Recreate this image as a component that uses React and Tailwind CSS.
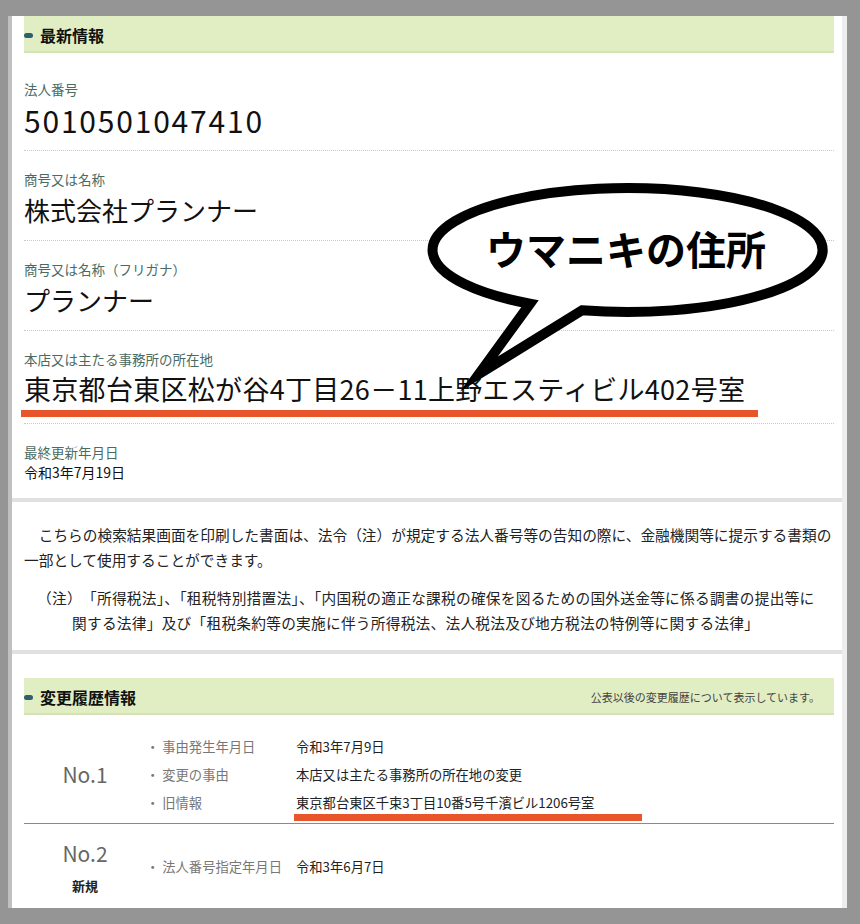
const jp = { fontFamily: '"Noto Sans CJK JP", "Noto Sans", sans-serif' }

function SectionBar({ title, note }) {
  return (
    <div className="flex items-center h-[37px] bg-[#e1edc3] border-b-2 border-[#d5e1b6] pt-[3px]">
      <span className="w-[9px] h-[5px] rounded-full bg-[#2e5f6c]" />
      <span className="ml-[7px] text-[16px] font-bold text-[#111]">{title}</span>
      {note && <span className="ml-auto mr-[14px] text-[11px] text-[#444]">{note}</span>}
    </div>
  )
}

function Item({ label, children, first, last }) {
  return (
    <div className={(first ? 'pt-[26px] ' : 'pt-[18px] ') + (last ? '' : 'border-b border-dotted border-[#c9c9c9]')}>
      <div className="text-[13.5px] leading-[20px] text-[#4a6b62]">{label}</div>
      {children}
    </div>
  )
}

function Row({ label, children }) {
  return (
    <div className="flex h-[28px] items-center text-[13.3px]">
      <span className="w-[150px] text-[#777]">・ {label}</span>
      <span className="text-[#222]">{children}</span>
    </div>
  )
}

export default function App() {
  return (
    <div className="relative w-[860px] h-[924px] bg-[#959595] pt-4 pl-2 overflow-hidden" style={jp}>
      <div className="w-[839px] h-[892px] bg-white border-l-4 border-l-[#c0c0c0] border-r-[5px] border-r-[#ededed] flex flex-col">
        {/* 最新情報 */}
        <div className="pl-3 pr-[8px]">
          <SectionBar title="最新情報" />
          <Item label="法人番号" first>
            <div className="text-[30px] leading-[42px] tracking-[1.8px] text-[#111] pb-[9px]">5010501047410</div>
          </Item>
          <Item label="商号又は名称">
            <div className="text-[26px] leading-[42px] text-[#111] pb-[9px]">株式会社プランナー</div>
          </Item>
          <Item label="商号又は名称（フリガナ）">
            <div className="text-[26px] leading-[42px] text-[#111] pb-[9px]">プランナー</div>
          </Item>
          <Item label="本店又は主たる事務所の所在地">
            <div className="text-[27px] leading-[40px] tracking-[0.3px] text-[#111] whitespace-nowrap">東京都台東区松が谷4丁目26－11上野エスティビル402号室</div>
            <div className="-ml-[3px] mt-[1px] w-[737px] h-[7px] bg-[#e8552b]" />
            <div className="h-[6px]" />
          </Item>
          <Item label="最終更新年月日" last>
            <div className="text-[14px] leading-[20px] text-[#111] pb-[16px]">令和3年7月19日</div>
          </Item>
        </div>

        <div className="h-[4px] bg-[#e0e0e0]" />

        {/* 注意書き */}
        <div className="pl-3 pr-[8px] pt-[20px] pb-[15px] text-[14.7px] leading-[25px] text-[#222]">
          <p className="indent-[1em]">こちらの検索結果画面を印刷した書面は、法令（注）が規定する法人番号等の告知の際に、金融機関等に提示する書類の一部として使用することができます。</p>
          <p className="mt-[13px] mr-[12px] pl-[48px] -indent-[35px] tracking-[0.25px]">（注）　「所得税法」、「租税特別措置法」、「内国税の適正な課税の確保を図るための国外送金等に係る調書の提出等に関する法律」及び「租税条約等の実施に伴う所得税法、法人税法及び地方税法の特例等に関する法律」</p>
        </div>

        <div className="h-[4px] bg-[#e0e0e0]" />

        {/* 変更履歴情報 */}
        <div className="pl-3 pr-[8px] pt-[24px]">
          <SectionBar title="変更履歴情報" note="公表以後の変更履歴について表示しています。" />
          <div className="flex items-center mt-[18px] pb-[6px] border-b border-[#8a8a8a]">
            <div className="w-[122px] text-center text-[21px] text-[#666]">No.1</div>
            <div>
              <Row label="事由発生年月日">令和3年7月9日</Row>
              <Row label="変更の事由">本店又は主たる事務所の所在地の変更</Row>
              <Row label="旧情報">
                <span className="relative">
                  東京都台東区千束3丁目10番5号千濱ビル1206号室
                  <span className="absolute -left-[2px] top-[21px] w-[348px] h-[7px] bg-[#e8552b]" />
                </span>
              </Row>
            </div>
          </div>
          <div className="flex items-center pt-[14px]">
            <div className="w-[122px] flex flex-col items-center">
              <div className="text-[21px] leading-[30px] text-[#666]">No.2</div>
              <div className="mt-[8px] text-[13px] leading-[20px] font-bold text-[#222]">新規</div>
            </div>
            <Row label="法人番号指定年月日">令和3年6月7日</Row>
          </div>
        </div>
      </div>

      {/* 吹き出し */}
      <svg className="absolute left-0 top-0 pointer-events-none" width="860" height="924" viewBox="0 0 860 924">
        <path
          d="M 530 303.7 L 479 374 L 582 310.3 A 195 62 0 1 0 530 303.7 Z"
          fill="#fff"
          stroke="#000"
          strokeWidth="10"
          strokeLinejoin="miter"
          strokeMiterlimit="6"
        />
        <text x="626" y="265" textAnchor="middle" fontSize="40" fontWeight="700" fill="#000" style={jp}>ウマニキの住所</text>
      </svg>
    </div>
  )
}
